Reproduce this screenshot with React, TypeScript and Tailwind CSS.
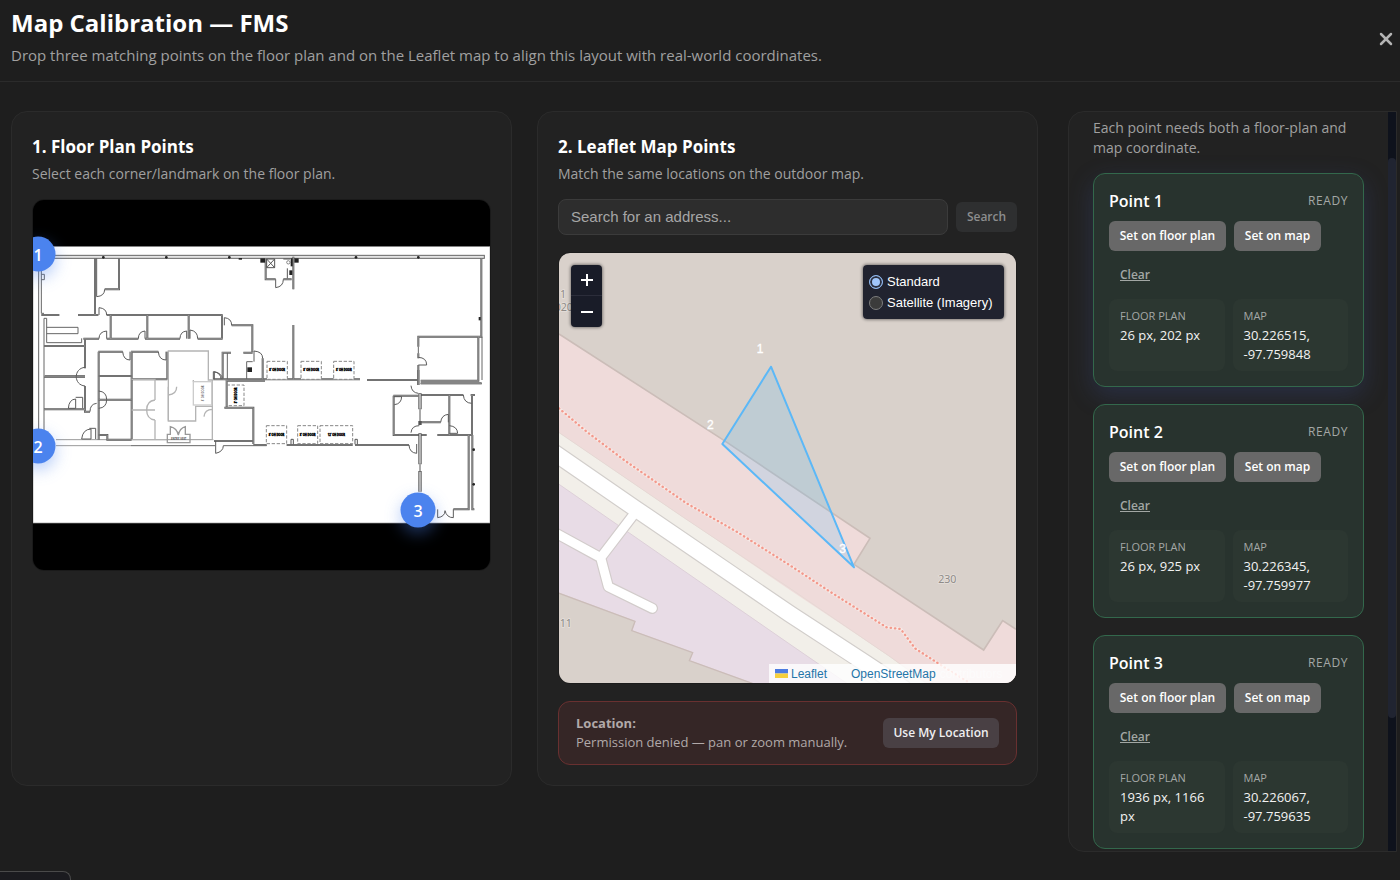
import { useState } from 'react';
import { X } from 'lucide-react';

interface CalibrationPoint {
  id: number;
  floor: string;
  map: string;
  active: boolean;
}

const points: CalibrationPoint[] = [
  { id: 1, floor: '26 px, 202 px', map: '30.226515, -97.759848', active: true },
  { id: 2, floor: '26 px, 925 px', map: '30.226345, -97.759977', active: false },
  { id: 3, floor: '1936 px, 1166 px', map: '30.226067, -97.759635', active: false },
];

const wallsUpper = `
  M195 190V360 M267 190V283H224 M34 360H88 M144 360H205 M230 360H578
  M242 360V431 M352 360V431 M476 360V431 M576 360V431
  M160 431H207 M230 431H325 M345 431H450 M503 431H578
  M605 391H667V470 M640 473H668 M42 453H165 M165 431V520 M42 545H165
  M206 470V734 M205 470H278 M305 470V734 M303 470H385 M412 470V553 M206 543H305 M305 553H412
  M578 473V553 M575 473H603 M550 553H990 M1011 555H1165
  M707 190V253H737 M760 253H785 M790 185V283 M790 390V553
  M1165 455V425H1354V190 M1165 475V490 M1165 510V570 M1345 425V557H1172 M698 490V553
`;

const wallsLower = `
  M45 19H165 M42 118H165 M165 48V125H180 M206 18H305 M206 89H305 M206 195H232V209H305
  M590 30V110 M583 113H670V222 M552 213H668 M590 32H705 M670 225H710
  M770 225H968 M975 225H1137 M1165 0V45 M1172 40H1355
  M1090 77H1165 M1091 77V195H1145 M1145 195H1190 M1172 75H1300 M1258 75V195
  M1172 157H1232 M1222 195H1325 M1326 75V195 M1322 75H1335
  M1316 195V418H1270 M1327 195V418H1333
`;

const doors = `
  M200 190V305 Q224 303 224 283 M207 360V338Q230 340 230 360
  M230 431V408Q207 410 207 431 M345 431V408Q325 410 325 431
  M470 431V408Q450 410 450 431 M480 431V405Q503 408 503 431
  M583 391V368Q605 370 605 391
  M165 517C130 520 130 570 165 573
  M278 470Q280 495 300 495V470 M385 470Q387 495 408 495V470
  M550 553V530Q573 533 573 553 M672 500V468Q698 470 698 490
  M737 253V278Q760 275 760 253 M1165 487Q1190 488 1190 510H1165
  M115 640Q117 613 137 612V640H115 M137 607H158V640
  M155 732Q158 703 183 702V732H155 M178 700H197V732
  M206 588Q230 590 230 614Q230 638 206 640 M180 650Q180 627 200 625
  M557 738V775Q580 770 580 752 M553 553V530Q577 535 577 553
  M1137 750Q1138 773 1160 775V747 M1143 572Q1145 593 1165 595
  M1091 605H1115Q1114 627 1093 629 M1143 713Q1145 692 1168 692
  M1232 682Q1234 660 1255 658V682 M1258 692Q1282 694 1283 715H1258
  M1300 600Q1302 624 1325 625
  M1223 943V968Q1245 965 1245 947Q1250 968 1270 968V943
`;

const doorLabels = [
  { x: 711, y: 499, w: 61, label: "8' OH DOOR" },
  { x: 813, y: 499, w: 61, label: "8' OH DOOR" },
  { x: 911, y: 499, w: 61, label: "8' OH DOOR" },
  { x: 709, y: 692, w: 61, label: "8' OH DOOR" },
  { x: 803, y: 692, w: 60, label: "8' OH DOOR" },
  { x: 870, y: 692, w: 98, label: "12' OH DOOR" },
];

function FloorPlan() {
  return (
    <svg viewBox="9 15 1371 1110" className="block h-full w-full" preserveAspectRatio="none" aria-hidden="true">
      <rect x="9" y="15" width="1371" height="1110" fill="#000" />
      <rect x="9" y="155" width="1371" height="829" fill="#fff" stroke="#999" strokeWidth="2" />

      {/* Outer shell */}
      <g fill="none" stroke="#666" strokeWidth="3">
        <rect x="26" y="181" width="1337" height="9" fill="#e5e5e5" />
        <path d="M26 190V740 M34 190V355H42 M34 238H43V254H34 M42 370V735 M50 370V443H155V430 M50 397H144V416H50" />
        <path d="M78 734H550 M78 752H303" stroke="#999" />
        <path d="M303 752H555 M580 752H710 M592 473V553 M650 500H668 M650 500V553 M1165 455V475 M1356 425V555 M1172 566H1356" />
        <path d="M42 370H50" />
      </g>

      {/* Walls are a dark stroke with a lighter core */}
      <g fill="none">
        <path d={wallsUpper} stroke="#5a5a5a" strokeWidth="6" />
        <path d={wallsUpper} stroke="#a8a8a8" strokeWidth="2" />
        <g transform="translate(0 525)">
          <path d={wallsLower} stroke="#5a5a5a" strokeWidth="6" />
          <path d={wallsLower} stroke="#a8a8a8" strokeWidth="2" />
        </g>
        <path d="M1170 595V643 M1170 678V690 M1170 715V808 M1170 828V890" stroke="#555" strokeWidth="10" />
        <path d="M1170 597V641 M1170 717V806 M1170 830V890" stroke="#c4c4c4" strokeWidth="5" />
        <path d="M1170 643V678 M1170 808V828" stroke="#555" strokeWidth="3" />
        <path d={doors} stroke="#5c5c5c" strokeWidth="3" />
      </g>

      {/* Greyed-out suite */}
      <g fill="none" stroke="#b4b4b4" strokeWidth="4">
        <path d="M415 677V468H535V555H550 M305 553H375V615 M305 645H375 M375 675V734 M375 615Q350 618 350 645Q350 672 375 675" />
        <path d="M415 575V678H497V634H547 M547 555V734 M440 575Q440 597 415 600 M305 734H412 M522 665Q524 643 547 643 M490 555V560" />
        <rect x="490" y="560" width="55" height="70" stroke="#ccc" />
        <path d="M412 718H421V695Q441 700 445 720Q449 700 466 695V718H480V743H412Z" stroke="#999" />
      </g>
      <text x="446" y="736" textAnchor="middle" fontSize="8" fontWeight="700" fill="#555">ENTRY VEST</text>
      <text transform="translate(521 595) rotate(-90)" textAnchor="middle" fontSize="8" fontWeight="700" fill="#777">8' OH DOOR</text>

      {/* Overhead doors */}
      {doorLabels.map((d) => (
        <g key={`${d.x}-${d.y}`}>
          <rect x={d.x} y={d.y} width={d.w} height="54" fill="#fff" stroke="#888" strokeWidth="3" strokeDasharray="10 5" />
          <text x={d.x + d.w / 2} y={d.y + 30} textAnchor="middle" fontSize="8" fontWeight="700" fill="#000" stroke="#000">{d.label}</text>
        </g>
      ))}
      <rect x="590" y="570" width="52" height="62" fill="none" stroke="#888" strokeWidth="3" strokeDasharray="10 5" />
      <text transform="translate(620 601) rotate(-90)" textAnchor="middle" fontSize="8" fontWeight="700" fill="#000" stroke="#000">8' OH DOOR</text>

      {/* Columns and fixtures */}
      <g fill="#222">
        <circle cx="220" cy="187" r="4" /><circle cx="409" cy="187" r="4" /><circle cx="598" cy="187" r="4" />
        <circle cx="978" cy="187" r="4" /><circle cx="1165" cy="187" r="4" />
        <rect x="626" y="189" width="10" height="5" />
        <rect x="691" y="190" width="14" height="13" /><rect x="793" y="190" width="13" height="13" />
        <rect x="782" y="190" width="6" height="24" /><rect x="778" y="226" width="9" height="14" />
        <rect x="652" y="517" width="14" height="14" />
        <rect x="1346" y="366" width="6" height="10" />
        <circle cx="1331" cy="764" r="4" /><circle cx="1331" cy="868" r="4" />
      </g>
      <path d="M783 748V733H790V748 M975 748V733H982V748 M710 192H734V218H710ZL734 218M734 192L710 218 M772 220V250 M760 192H780" fill="none" stroke="#555" strokeWidth="3" />
      <circle cx="775" cy="202" r="5" fill="none" stroke="#555" strokeWidth="2" />
    </svg>
  );
}

const buildingEdge = 'M27 432L523 752L960 1045L912 1123L1301 1380L1358 1292L1398 1318';
const footway = 'M27 655L110 725L225 812L410 940L560 1025L720 1126L840 1205L1010 1312L1052 1317L1095 1375L1180 1430L1260 1479';
const mainRoad = 'M-20 766L27 798L255 955L720 1272L947 1420L1060 1495';
const serviceRoad = 'M0 1020L152 1103L250 975 M152 1103L175 1190L307 1255';

function StreetMap() {
  return (
    <svg viewBox="27 189 1371 1290" className="block h-full w-full" preserveAspectRatio="xMidYMid slice" aria-hidden="true">
      <rect x="-200" y="0" width="1900" height="1700" fill="#d9d1cb" />
      <path d="M20 723L400 982L720 1195L1020 1400L1140 1490H880L720 1380L20 890Z" fill="#f2efe9" />
      <path d={`${buildingEdge}V1490H1140L1020 1400L720 1200L400 982L20 723V428Z`} fill="#efdbda" />
      <path d={buildingEdge} fill="none" stroke="#cbbdb8" strokeWidth="5" />
      <path d="M20 723L400 982L720 1195L1020 1400L1130 1479" fill="none" stroke="#e6d8d4" strokeWidth="3" />
      <path d="M20 878L720 1363L905 1490H634L418 1412L428 1388L245 1322L255 1294L20 1207Z" fill="#e8dce6" stroke="#ddd0d8" strokeWidth="3" />
      <path d="M20 1207L255 1294L245 1322L428 1388L418 1412L634 1490" fill="none" stroke="#cbbdb8" strokeWidth="4" />

      <g fill="none" strokeLinecap="round" strokeLinejoin="round">
        <path d={serviceRoad} stroke="#d2cccb" strokeWidth="34" />
        <path d={mainRoad} stroke="#d2cecb" strokeWidth="54" />
        <path d={mainRoad} stroke="#fff" strokeWidth="47" />
        <path d={serviceRoad} stroke="#fff" strokeWidth="27" />
        <path d={footway} stroke="#f7e9e6" strokeWidth="9" />
        <path d={footway} stroke="#f3998c" strokeWidth="7" strokeDasharray="1 12" />
      </g>

      <path d="M663 530L517 762L912 1132Z" fill="#5cb8f7" fillOpacity="0.2" stroke="#5cb8f7" strokeWidth="6" strokeLinejoin="round" />

      <g className="font-['Noto_Sans',sans-serif]" fontSize="32" fill="#8f8b88" stroke="#e5dfda" strokeWidth="5" paintOrder="stroke">
        <text x="1192" y="1178" textAnchor="middle">230</text>
        <text x="29" y="1311">11</text>
        <text x="30" y="325">1</text>
        <text x="14" y="363">020</text>
      </g>
      <g className="font-['Liberation_Sans',sans-serif]" fontSize="36" fill="#fff" stroke="#fff" textAnchor="middle">
        <text x="630" y="488">1</text>
        <text x="481" y="718">2</text>
        <text x="878" y="1090">3</text>
      </g>
    </svg>
  );
}

function PointCard({ point }: { point: CalibrationPoint }) {
  const glow = point.active ? 'shadow-[0_8px_24px_rgba(59,80,150,0.3)]' : '';
  return (
    <article className={`rounded-xl border border-[#33684c] bg-[#28332e] p-[15px] ${glow}`}>
      <div className="flex h-6 items-center justify-between">
        <h3 className="text-base font-semibold text-white">Point {point.id}</h3>
        <span className="text-xs tracking-wider text-[#a4a8a6]">READY</span>
      </div>
      <div className="mt-2 flex flex-wrap gap-x-2 gap-y-[9px] text-xs font-semibold">
        <button type="button" className="h-[30px] w-[117px] rounded-md bg-[#686868] whitespace-nowrap text-white">Set on floor plan</button>
        <button type="button" className="h-[30px] w-[87px] rounded-md bg-[#686868] whitespace-nowrap text-white">Set on map</button>
        <button type="button" className="h-[30px] px-[11px] text-[#a2a7a4] underline">Clear</button>
      </div>
      <dl className="mt-[9px] grid grid-cols-2 gap-2 text-[#f2f2f2]">
        <div className="min-h-[72px] rounded-lg bg-[#2c3731] px-[11px] py-[7px]">
          <dt className="text-[11px] leading-5 text-[#a4a8a6]">FLOOR PLAN</dt>
          <dd className="text-[13px] leading-[19px] font-medium">{point.floor}</dd>
        </div>
        <div className="min-h-[72px] rounded-lg bg-[#2c3731] px-[11px] py-[7px]">
          <dt className="text-[11px] leading-5 text-[#a4a8a6]">MAP</dt>
          <dd className="text-[13px] leading-[19px] font-medium">{point.map}</dd>
        </div>
      </dl>
    </article>
  );
}

const pin = 'absolute flex size-[35px] -translate-x-1/2 -translate-y-1/2 items-center justify-center rounded-full bg-[#4b83ee] text-base font-semibold text-white shadow-[0_6px_16px_rgba(75,131,238,0.4)]';

export default function App() {
  const [layer, setLayer] = useState('standard');
  const [query, setQuery] = useState('');

  return (
    <div className="min-h-screen bg-[#1e1e1e] font-['Open_Sans','Noto_Sans',sans-serif] text-white">
      <header className="flex h-[82px] items-center justify-between border-b border-[#2b2b2b] pr-1 pb-1 pl-[11px]">
        <div className="pb-1">
          <h1 className="text-2xl leading-9 font-bold">Map Calibration — FMS</h1>
          <p className="text-[15px] leading-7 text-[#a0a0a0]">
            Drop three matching points on the floor plan and on the Leaflet map to align this layout with real-world coordinates.
          </p>
        </div>
        <button type="button" aria-label="Close" className="text-[#b4b4b4]">
          <X size={20} strokeWidth={3} />
        </button>
      </header>

      <main className="flex items-start gap-[30px] pt-[29px] pr-[3px] pb-7 pl-[11px]">
        <div className="flex min-w-0 flex-1 gap-[25px]">
          {/* Floor plan */}
          <section className="min-w-0 flex-1 rounded-2xl border border-[#2b2b2b] bg-[#222222] p-5">
            <h2 className="mt-px text-[17px] leading-7 font-bold">1. Floor Plan Points</h2>
            <p className="text-sm leading-[26px] text-[#a0a0a0]">Select each corner/landmark on the floor plan.</p>
            <div className="relative mt-3 h-[372px] overflow-hidden rounded-xl border border-[#1a1a1a]">
              <FloorPlan />
              <button type="button" className={`${pin} top-[54px] left-[5px]`}>1</button>
              <button type="button" className={`${pin} top-[246px] left-[5px]`}>2</button>
              <button type="button" className={`${pin} top-[310px] left-[385px]`}>3</button>
            </div>
          </section>

          {/* Leaflet map */}
          <section className="min-w-0 flex-1 rounded-2xl border border-[#2b2b2b] bg-[#222222] p-5">
            <h2 className="mt-px text-[17px] leading-7 font-bold">2. Leaflet Map Points</h2>
            <p className="text-sm leading-[26px] text-[#a0a0a0]">Match the same locations on the outdoor map.</p>
            <form className="mt-3 flex items-center gap-2" onSubmit={(e) => e.preventDefault()}>
              <input
                type="text"
                aria-label="Address"
                value={query}
                onChange={(e) => setQuery(e.target.value)}
                placeholder="Search for an address..."
                className="h-9 min-w-0 flex-1 rounded-lg border border-[#3b3b3b] bg-[#2d2d2d] px-3 pb-0.5 font-['Liberation_Sans',sans-serif] text-[15px] text-white placeholder:text-[#a6a6a6]"
              />
              <button type="submit" className="h-[30px] w-[61px] rounded-md bg-[#2e2f30] text-xs font-semibold text-[#8c8d8e]">Search</button>
            </form>

            <div className="relative mt-[17px] h-[432px] overflow-hidden rounded-xl border border-[#1c1c1c] font-['Liberation_Sans',sans-serif]">
              <StreetMap />
              <div className="absolute top-3 left-3 flex flex-col rounded-sm bg-[#191c28] shadow-[0_0_3px_1px_rgba(0,0,0,0.4)]">
                <button type="button" aria-label="Zoom in" className="flex size-[31px] items-center justify-center border-b border-[#2b2d3a]">
                  <svg width="14" height="14" viewBox="0 0 14 14" stroke="#fff" strokeWidth="2"><path d="M7 1v12M1 7h12" /></svg>
                </button>
                <button type="button" aria-label="Zoom out" className="flex size-[31px] items-center justify-center">
                  <svg width="14" height="14" viewBox="0 0 14 14" stroke="#fff" strokeWidth="2"><path d="M1 7h12" /></svg>
                </button>
              </div>
              <fieldset className="absolute top-3 right-3 flex h-[54px] w-[141px] flex-col justify-center rounded-sm bg-[#21232f] pl-1.5 text-[13px] text-white shadow-[0_0_3px_1px_rgba(0,0,0,0.4)]">
                <label className="flex h-[21px] items-center gap-1 whitespace-nowrap">
                  <input
                    type="radio"
                    name="layer"
                    checked={layer === 'standard'}
                    onChange={() => setLayer('standard')}
                    className="size-3.5 shrink-0 appearance-none rounded-full border border-[#7d7d7d] bg-[#3b3b3b] checked:border-[#8fb8ef] checked:bg-[#a0c6fb] checked:shadow-[inset_0_0_0_2px_#2b3040]"
                  />
                  Standard
                </label>
                <label className="flex h-[21px] items-center gap-1 whitespace-nowrap">
                  <input
                    type="radio"
                    name="layer"
                    checked={layer === 'satellite'}
                    onChange={() => setLayer('satellite')}
                    className="size-3.5 shrink-0 appearance-none rounded-full border border-[#7d7d7d] bg-[#3b3b3b] checked:border-[#8fb8ef] checked:bg-[#a0c6fb] checked:shadow-[inset_0_0_0_2px_#2b3040]"
                  />
                  Satellite (Imagery)
                </label>
              </fieldset>
              <div className="absolute right-0 bottom-0 flex h-[19px] w-[247px] items-center bg-white/80 pl-1.5 text-[12px] whitespace-nowrap text-[#fdfcfc]">
                <svg width="13" height="9" viewBox="0 0 13 9" className="mr-[3px]" aria-hidden="true">
                  <path fill="#4c7be1" d="M0 0h13v4.500H0z" />
                  <path fill="#f5cf3c" d="M0 4.500h13V9H0z" />
                </svg>
                <a href="#leaflet" className="w-[60px] text-[#2475a8]">Leaflet</a>
                <a href="#osm" className="mr-1 text-[#2475a8]">OpenStreetMap</a>
                contributors
              </div>
            </div>

            <div className="mt-[17px] flex items-center justify-between rounded-xl border border-[#693030] bg-[#352626] px-[17px] py-3">
              <div className="text-[13px] leading-[19px] text-[#b1a9a9]">
                <strong className="block font-bold">Location:</strong>
                <span className="whitespace-nowrap">Permission denied — pan or zoom manually.</span>
              </div>
              <button type="button" className="h-[30px] w-[116px] rounded-md bg-[#494044] text-xs font-semibold whitespace-nowrap text-[#f0eef0]">Use My Location</button>
            </div>
          </section>
        </div>

        {/* Points list */}
        <aside className="flex w-[329px] shrink-0 overflow-hidden rounded-l-2xl border border-[#2b2b2b] bg-[#222222]">
          <div className="min-w-0 flex-1 px-6 pt-1.5 pb-[2px]">
            <p className="text-sm leading-5 text-[#a0a0a0]">Each point needs both a floor-plan and map coordinate.</p>
            <div className="mt-[15px] flex flex-col gap-[17px]">
              {points.map((p) => (
                <PointCard key={p.id} point={p} />
              ))}
            </div>
          </div>
          <div className="w-2 bg-[#0e121c] pt-[46px]">
            <div className="h-[560px] rounded-full bg-[#202431]" />
          </div>
        </aside>
      </main>

      {/* Edge of the collapsed status bubble */}
      <div className="fixed bottom-0 left-0 h-[9px] w-[71px] rounded-tr-lg border-t border-r border-[#4a4a4a] bg-[#1b1b1f]" />
    </div>
  );
}
